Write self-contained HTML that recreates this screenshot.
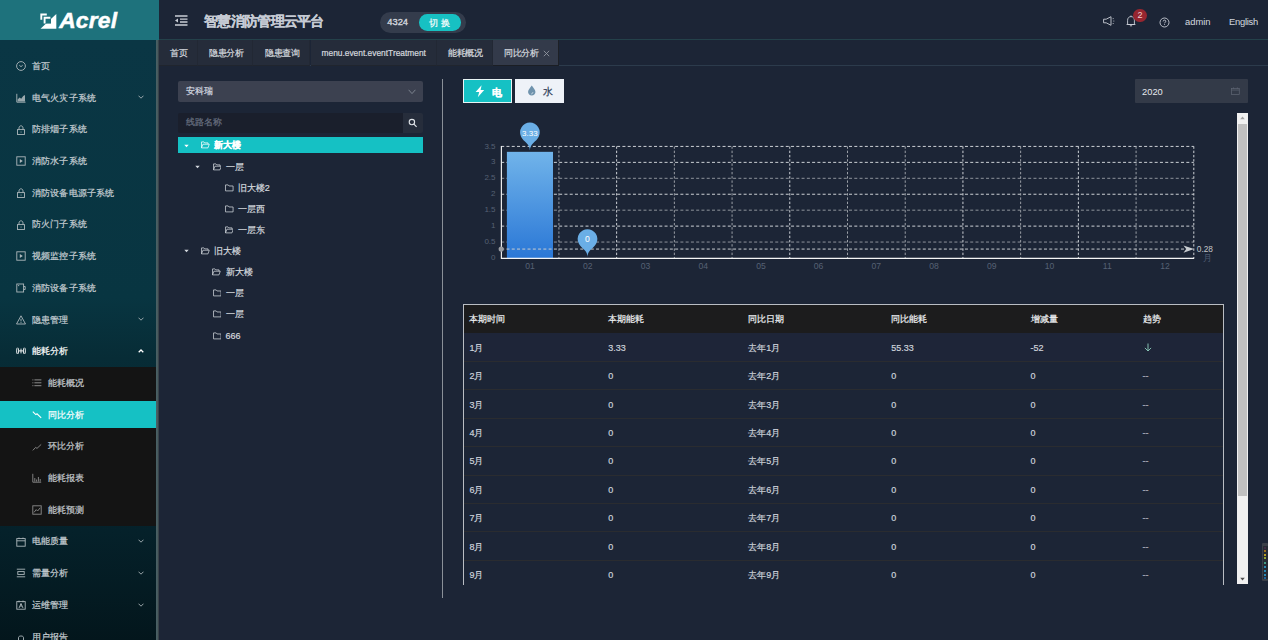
<!DOCTYPE html>
<html><head><meta charset="utf-8">
<style>
*{margin:0;padding:0;box-sizing:border-box}
html,body{width:1268px;height:640px;overflow:hidden}
body{background:#1c2536;font-family:"Liberation Sans",sans-serif;color:#c9ced6;position:relative;-webkit-text-stroke:0.2px currentColor}
.a{position:absolute}
#logo{left:0;top:0;width:158.5px;height:39.7px;background:#1e727c}
#hdr{left:158.5px;top:0;width:1109.5px;height:39.5px;background:#1c2536}
#side{left:0;top:39.7px;width:156px;height:600.3px;background:linear-gradient(#0a3644 0%,#083541 43%,#072c36 53%,#05212a 82%,#03161c 100%);overflow:hidden}
#sscroll{left:156px;top:39.7px;width:3px;height:600.3px;background:linear-gradient(90deg,#4a6266 0,#46585c 66%,#394349 66%)}
.mi{position:absolute;left:0;width:156px;height:31.7px;font-size:9.2px;color:#c9d2d6;line-height:31.7px;white-space:nowrap}
.mi .ic{position:absolute;left:16px;top:11px;width:10px;height:10px}
.mi .tx{position:absolute;left:32px;top:0.8px;letter-spacing:0.14px}
.mi .chev{position:absolute;left:137.5px;top:13px;width:6px;height:4px}
.sub .ic{left:32px}
.sub .tx{left:48px}
#submenu{left:0;top:367.15px;width:156px;height:158.5px;background:#141414}
#tabs{left:159px;top:39.2px;width:1109px;height:26.6px;background:#1c2536;border-top:1px solid #24414a;border-bottom:1px solid #2c3b4c}
.tab{position:absolute;top:0;height:25.6px;background:#252c3a;font-size:9px;letter-spacing:-0.45px;line-height:27.6px;color:#d5d9df;text-align:left;border-right:1px solid #222834;border-bottom:1px solid #20252e}
</style></head><body>

<div id="logo" class="a">
<svg class="a" style="left:40px;top:13px" width="17" height="17" viewBox="0 0 17 17">
<path d="M0.5,15.7 L16.3,15.7 L16.3,1.1 Z" fill="#fff"/>
<rect x="6" y="5.6" width="5" height="5" fill="#1e727c"/>
<path d="M1.3,6.8 V1.5 H6.8" stroke="#fff" stroke-width="1.9" fill="none"/>
<path d="M4.6,10.4 V4.8 H10.4" stroke="#fff" stroke-width="1.9" fill="none"/>
</svg>
<div class="a" style="left:59.2px;top:7.2px;font-size:22.8px;font-weight:bold;font-style:italic;color:#fff;line-height:26px;letter-spacing:0.2px;-webkit-text-stroke:0.5px #fff">Acrel</div>
</div>
<div id="hdr" class="a">
<svg class="a" style="left:16.5px;top:15px" width="13" height="11" viewBox="0 0 13 11">
<path d="M0,1 H12.5 M5,4.2 H12.5 M5,7 H12.5 M0,10 H12.5" stroke="#c9ced6" stroke-width="1.3"/>
<path d="M0,5.6 L3,3.6 V7.6 Z" fill="#c9ced6"/>
</svg>
<div class="a" style="left:45.5px;top:11px;font-size:14px;letter-spacing:-0.7px;font-weight:bold;color:#c5cad3;line-height:20px;white-space:nowrap">智慧消防管理云平台</div>
<div class="a" style="left:221.5px;top:11.8px;width:85.5px;height:21.4px;border-radius:11px;background:#343c4c">
 <div class="a" style="left:7.3px;top:-1px;font-size:9.3px;line-height:22px;color:#d3d7de;-webkit-text-stroke:0.35px #d3d7de">4324</div>
 <div class="a" style="left:38.5px;top:2.3px;width:42.5px;height:16.5px;border-radius:8.25px;background:#17c1c3;color:#fff;font-size:9.2px;line-height:18px;text-align:center;letter-spacing:3px;padding-left:3px">切换</div>
</div>
<svg class="a" style="left:944px;top:15.5px" width="12" height="10" viewBox="0 0 12 10">
<path d="M0.6,3.2 H3.2 L8,0.7 V9.3 L3.2,6.8 H0.6 Z" stroke="#c9ced6" stroke-width="0.9" fill="none" stroke-linejoin="round"/>
<path d="M10.2,2.2 v0.9 M10.8,4.6 v0.9 M10.2,7 v0.9" stroke="#c9ced6" stroke-width="0.9"/>
</svg>
<svg class="a" style="left:967.5px;top:14.5px" width="10" height="12" viewBox="0 0 10 12">
<path d="M1.6,9.5 V5.2 C1.6,3 3,1.6 5,1.6 C7,1.6 8.4,3 8.4,5.2 V9.5 Z M0.6,9.5 H9.4 M3.9,10.8 H6.1 M5,0.5 V1.6" stroke="#c9ced6" stroke-width="0.9" fill="none"/>
</svg>
<div class="a" style="left:974.8px;top:8.6px;width:13.4px;height:13.4px;border-radius:50%;background:#962630;color:#f0d0d0;font-size:9px;line-height:13.4px;text-align:center;-webkit-text-stroke:0">2</div>
<svg class="a" style="left:1000.3px;top:16.8px" width="11" height="11" viewBox="0 0 11 11">
<circle cx="5.5" cy="5.5" r="4.5" stroke="#c9ced6" stroke-width="0.9" fill="none"/>
<path d="M4.2,4.4 C4.2,3.6 4.8,3.1 5.5,3.1 C6.2,3.1 6.8,3.6 6.8,4.3 C6.8,5.1 5.6,5.3 5.6,6.3" stroke="#c9ced6" stroke-width="0.9" fill="none"/>
<circle cx="5.6" cy="7.6" r="0.5" fill="#c9ced6"/>
</svg>
<div class="a" style="left:1026.5px;top:14.6px;font-size:9.4px;line-height:14px;color:#d0d4dc;-webkit-text-stroke:0.05px #d0d4dc">admin</div>
<div class="a" style="left:1070.5px;top:14.6px;font-size:9.4px;letter-spacing:-0.25px;line-height:14px;color:#d0d4dc;-webkit-text-stroke:0.05px #d0d4dc">English</div>
</div>

<div id="side" class="a">
<div class="a" style="left:0;top:327.45px;width:156px;height:158.5px;background:#141414"></div>
<div class="mi" style="top:10.45px;color:#c5cdd2"><svg class="a" style="left:16px;top:11px" width="10" height="10" viewBox="0 0 10 10"><circle cx="5" cy="5" r="4.4" stroke="#aeb8bc" stroke-width="0.9" fill="none"/><path d="M3.3,4.2 Q5,7.2 6.7,4.2" stroke="#aeb8bc" stroke-width="0.9" fill="none"/></svg><span class="tx" style="left:32px">首页</span></div>
<div class="mi" style="top:42.15px;color:#c5cdd2"><svg class="a" style="left:16px;top:11px" width="10" height="10" viewBox="0 0 10 10"><path d="M0.8,0.8 V9.2 H9.5" stroke="#aeb8bc" stroke-width="0.9" fill="none"/><path d="M1.6,8.6 V6.4 L3.6,4.4 L5.2,5.8 L7.2,3 L9,2 V8.6 Z" fill="#9aa8ad"/></svg><span class="tx" style="left:32px">电气火灾子系统</span><svg class="a" style="left:137.5px;top:13.5px" width="6" height="4" viewBox="0 0 6 4"><path d="M0.5,0.7 L3,3.2 L5.5,0.7" stroke="#aab4b8" stroke-width="0.9" fill="none"/></svg></div>
<div class="mi" style="top:73.85px;color:#c5cdd2"><svg class="a" style="left:16px;top:11px" width="10" height="10" viewBox="0 0 10 10"><rect x="1.5" y="4.6" width="7" height="4.9" stroke="#aeb8bc" stroke-width="0.9" fill="none"/><path d="M3,4.6 V3 C3,1.7 3.9,0.8 5,0.8 C6.1,0.8 7,1.7 7,3 V4.6" stroke="#aeb8bc" stroke-width="0.9" fill="none"/><rect x="4.6" y="6.6" width="0.9" height="0.9" fill="#aeb8bc"/></svg><span class="tx" style="left:32px">防排烟子系统</span></div>
<div class="mi" style="top:105.55px;color:#c5cdd2"><svg class="a" style="left:16px;top:11px" width="10" height="10" viewBox="0 0 10 10"><rect x="0.8" y="0.8" width="8.4" height="8.4" stroke="#aeb8bc" stroke-width="0.9" fill="none"/><path d="M3.8,3 L6.8,5 L3.8,7 Z" fill="#aeb8bc"/></svg><span class="tx" style="left:32px">消防水子系统</span></div>
<div class="mi" style="top:137.25px;color:#c5cdd2"><svg class="a" style="left:16px;top:11px" width="10" height="10" viewBox="0 0 10 10"><rect x="1.5" y="4.6" width="7" height="4.9" stroke="#aeb8bc" stroke-width="0.9" fill="none"/><path d="M3,4.6 V3 C3,1.7 3.9,0.8 5,0.8 C6.1,0.8 7,1.7 7,3 V4.6" stroke="#aeb8bc" stroke-width="0.9" fill="none"/><rect x="4.6" y="6.6" width="0.9" height="0.9" fill="#aeb8bc"/></svg><span class="tx" style="left:32px">消防设备电源子系统</span></div>
<div class="mi" style="top:168.95px;color:#c5cdd2"><svg class="a" style="left:16px;top:11px" width="10" height="10" viewBox="0 0 10 10"><rect x="1.5" y="4.6" width="7" height="4.9" stroke="#aeb8bc" stroke-width="0.9" fill="none"/><path d="M3,4.6 V3 C3,1.7 3.9,0.8 5,0.8 C6.1,0.8 7,1.7 7,3 V4.6" stroke="#aeb8bc" stroke-width="0.9" fill="none"/><rect x="4.6" y="6.6" width="0.9" height="0.9" fill="#aeb8bc"/></svg><span class="tx" style="left:32px">防火门子系统</span></div>
<div class="mi" style="top:200.65px;color:#c5cdd2"><svg class="a" style="left:16px;top:11px" width="10" height="10" viewBox="0 0 10 10"><rect x="0.8" y="0.8" width="8.4" height="8.4" stroke="#aeb8bc" stroke-width="0.9" fill="none"/><path d="M3.8,3 L6.8,5 L3.8,7 Z" fill="#aeb8bc"/></svg><span class="tx" style="left:32px">视频监控子系统</span></div>
<div class="mi" style="top:232.35px;color:#c5cdd2"><svg class="a" style="left:16px;top:11px" width="10" height="10" viewBox="0 0 10 10"><rect x="0.8" y="1" width="6.8" height="8" stroke="#aeb8bc" stroke-width="0.9" fill="none"/><path d="M7.6,3.5 H9.2 V6.5 H7.6" stroke="#aeb8bc" stroke-width="0.9" fill="none"/><path d="M2,2.6 H3.2" stroke="#aeb8bc" stroke-width="0.9" fill="none"/></svg><span class="tx" style="left:32px">消防设备子系统</span></div>
<div class="mi" style="top:264.05px;color:#c5cdd2"><svg class="a" style="left:16px;top:11px" width="10" height="10" viewBox="0 0 10 10"><path d="M5,0.8 L9.5,9 H0.5 Z" stroke="#aeb8bc" stroke-width="0.9" fill="none" stroke-linejoin="round"/><path d="M5,3.8 V6.4" stroke="#aeb8bc" stroke-width="0.9" fill="none"/><circle cx="5" cy="7.6" r="0.5" fill="#aeb8bc"/></svg><span class="tx" style="left:32px">隐患管理</span><svg class="a" style="left:137.5px;top:13.5px" width="6" height="4" viewBox="0 0 6 4"><path d="M0.5,0.7 L3,3.2 L5.5,0.7" stroke="#aab4b8" stroke-width="0.9" fill="none"/></svg></div>
<div class="mi" style="top:295.75px;color:#fff"><svg class="a" style="left:16px;top:11px" width="10" height="10" viewBox="0 0 10 10"><ellipse cx="1.6" cy="4.9" rx="1" ry="3.1" stroke="#fff" stroke-width="0.9" fill="none"/><ellipse cx="8.4" cy="4.9" rx="1" ry="3.1" stroke="#fff" stroke-width="0.9" fill="none"/><path d="M2.6,4.9 H7.4 M5,2.6 V7.4" stroke="#fff" stroke-width="0.9"/></svg><span class="tx" style="left:32px">能耗分析</span><svg class="a" style="left:137.5px;top:14px" width="6" height="4" viewBox="0 0 6 4"><path d="M0.7,3.2 L3,1 L5.3,3.2" stroke="#fff" stroke-width="1.3" fill="none"/></svg></div>
<div class="mi" style="top:327.45px;color:#c3c8cc"><svg class="a" style="left:32px;top:11px" width="10" height="10" viewBox="0 0 10 10"><path d="M0.4,1.9 H1.4 M0.4,4.8 H1.4 M0.4,7.7 H1.4 M2.4,1.9 H9.4 M2.4,4.8 H9.4 M2.4,7.7 H9.4" stroke="#8c8c8c" stroke-width="1"/></svg><span class="tx" style="left:48px">能耗概况</span></div>
<div class="a" style="left:0;top:361.80px;width:156px;height:26.4px;background:#15c1c4"></div>
<div class="mi" style="top:359.15px;color:#fff"><svg class="a" style="left:32px;top:11px" width="10" height="10" viewBox="0 0 10 10"><path d="M0.8,1.6 L3.8,4.6 L5,3.8 L9.2,7.8" stroke="#fff" stroke-width="1.1" fill="none"/></svg><span class="tx" style="left:48px">同比分析</span></div>
<div class="mi" style="top:390.85px;color:#c3c8cc"><svg class="a" style="left:32px;top:11px" width="10" height="10" viewBox="0 0 10 10"><path d="M0.8,8.4 L3.6,5.4 L5,6.4 L9.2,2.4" stroke="#8c8c8c" stroke-width="0.9" fill="none"/></svg><span class="tx" style="left:48px">环比分析</span></div>
<div class="mi" style="top:422.55px;color:#c3c8cc"><svg class="a" style="left:32px;top:11px" width="10" height="10" viewBox="0 0 10 10"><path d="M0.8,0.8 V9.2 H9.2" stroke="#8c8c8c" stroke-width="0.9" fill="none"/><path d="M2.8,8.6 V5 M4.6,8.6 V6.5 M6.4,8.6 V4 M8.2,8.6 V6" stroke="#8c8c8c" stroke-width="0.9" fill="none"/></svg><span class="tx" style="left:48px">能耗报表</span></div>
<div class="mi" style="top:454.25px;color:#c3c8cc"><svg class="a" style="left:32px;top:11px" width="10" height="10" viewBox="0 0 10 10"><rect x="0.8" y="0.8" width="8.4" height="8.4" stroke="#8c8c8c" stroke-width="0.9" fill="none"/><path d="M2,7.4 L4.2,4.6 L5.6,6 L8.2,2.8" stroke="#8c8c8c" stroke-width="0.9" fill="none"/></svg><span class="tx" style="left:48px">能耗预测</span></div>
<div class="mi" style="top:485.95px;color:#c5cdd2"><svg class="a" style="left:16px;top:11px" width="10" height="10" viewBox="0 0 10 10"><rect x="0.8" y="1.6" width="8.4" height="7.6" stroke="#aeb8bc" stroke-width="0.9" fill="none"/><path d="M0.8,3.8 H9.2 M3,0.6 V2 M7,0.6 V2" stroke="#aeb8bc" stroke-width="0.9" fill="none"/></svg><span class="tx" style="left:32px">电能质量</span><svg class="a" style="left:137.5px;top:13.5px" width="6" height="4" viewBox="0 0 6 4"><path d="M0.5,0.7 L3,3.2 L5.5,0.7" stroke="#aab4b8" stroke-width="0.9" fill="none"/></svg></div>
<div class="mi" style="top:517.65px;color:#c5cdd2"><svg class="a" style="left:16px;top:11px" width="10" height="10" viewBox="0 0 10 10"><path d="M0.8,1.2 H9.2 M0.8,8.8 H9.2" stroke="#aeb8bc" stroke-width="0.9" fill="none"/><rect x="1.8" y="3.6" width="6.4" height="2.8" stroke="#aeb8bc" stroke-width="0.9" fill="none"/></svg><span class="tx" style="left:32px">需量分析</span><svg class="a" style="left:137.5px;top:13.5px" width="6" height="4" viewBox="0 0 6 4"><path d="M0.5,0.7 L3,3.2 L5.5,0.7" stroke="#aab4b8" stroke-width="0.9" fill="none"/></svg></div>
<div class="mi" style="top:549.35px;color:#c5cdd2"><svg class="a" style="left:16px;top:11px" width="10" height="10" viewBox="0 0 10 10"><rect x="0.8" y="1.6" width="8.4" height="7.6" stroke="#aeb8bc" stroke-width="0.9" fill="none"/><path d="M3,0.6 V2.4 M7,0.6 V2.4 M3,8 L5,3.6 L7,8 M5,3.6 V7" stroke="#aeb8bc" stroke-width="0.9" fill="none"/></svg><span class="tx" style="left:32px">运维管理</span><svg class="a" style="left:137.5px;top:13.5px" width="6" height="4" viewBox="0 0 6 4"><path d="M0.5,0.7 L3,3.2 L5.5,0.7" stroke="#aab4b8" stroke-width="0.9" fill="none"/></svg></div>
<div class="mi" style="top:581.05px;color:#c5cdd2"><svg class="a" style="left:16px;top:11px" width="10" height="10" viewBox="0 0 10 10"><path d="M1,9 H9 M2.5,9 V5.5 C2.5,3.5 7.5,3.5 7.5,5.5 V9" stroke="#aeb8bc" stroke-width="0.9" fill="none"/></svg><span class="tx" style="left:32px">用户报告</span></div>
</div>
<div id="sscroll" class="a"></div>
<div id="tabs" class="a">
<div class="tab" style="left:0.0px;width:38.5px;padding-left:11.0px;">首页</div>
<div class="tab" style="left:38.5px;width:55.8px;padding-left:11.5px;">隐患分析</div>
<div class="tab" style="left:94.3px;width:57.2px;padding-left:12.0px;">隐患查询</div>
<div class="tab" style="left:151.5px;width:126.0px;padding-left:11.0px;font-size:8.4px;letter-spacing:0;">menu.event.eventTreatment</div>
<div class="tab" style="left:277.5px;width:56.5px;padding-left:11.5px;">能耗概况</div>
<div class="tab" style="left:334.0px;width:65.6px;padding-left:11.4px;background:#333a4a;border-right-color:#1d2026;border-bottom-color:#1b1e24;">同比分析<svg style="position:absolute;left:49.8px;top:9.6px" width="7" height="7" viewBox="0 0 7 7"><path d="M0.8,0.8 L6.2,6.2 M6.2,0.8 L0.8,6.2" stroke="#9aa0a8" stroke-width="0.8"/></svg></div>
</div>

<!-- left panel -->
<div class="a" style="left:178.3px;top:81px;width:244.5px;height:21px;background:#3c4150;border-radius:2px">
 <div class="a" style="left:7.5px;top:0;font-size:9px;line-height:21px;color:#d6dae0">安科瑞</div>
 <svg class="a" style="left:229.5px;top:7.5px" width="8" height="6" viewBox="0 0 8 6"><path d="M0.6,0.8 L4,4.6 L7.4,0.8" stroke="#8c939e" stroke-width="0.8" fill="none"/></svg>
</div>
<div class="a" style="left:178.3px;top:113.2px;width:225px;height:19.8px;background:#1a1f2c;border-radius:2px 0 0 2px">
 <div class="a" style="left:7.3px;top:0;font-size:9px;line-height:19.8px;color:#687080">线路名称</div>
</div>
<div class="a" style="left:403.2px;top:113.2px;width:19.6px;height:19.8px;background:#262d3b;border-radius:0 2px 2px 0">
 <svg class="a" style="left:4.8px;top:5px" width="10" height="10" viewBox="0 0 10 10"><circle cx="3.9" cy="4.1" r="2.7" stroke="#e0e4e8" stroke-width="1.1" fill="none"/><path d="M5.9,6.1 L8.6,8.8" stroke="#e0e4e8" stroke-width="1.2"/></svg>
</div>
<div class="a" style="left:178.3px;top:137.2px;width:244.5px;height:15.8px;background:#15c1c4"></div>
<svg class="a" style="left:184.3px;top:143.5px" width="5" height="4" viewBox="0 0 5 4"><path d="M0.3,0.8 H4.7 L2.5,3.3 Z" fill="#ffffff"/></svg>
<svg class="a" style="left:200.8px;top:141.30px" width="8.8" height="8" viewBox="0 0 10 9"><path d="M0.6,7.8 V1 H3.4 L4.4,2.1 H8 V3.6 M0.6,7.8 L2.2,3.6 H9.4 L7.9,7.8 Z" stroke="#ffffff" stroke-width="0.85" fill="none" stroke-linejoin="round"/></svg>
<div class="a" style="left:213.7px;top:138.30px;font-size:9px;line-height:14px;color:#ffffff;font-weight:bold;white-space:nowrap">新大楼</div>
<svg class="a" style="left:195.3px;top:164.7px" width="5" height="4" viewBox="0 0 5 4"><path d="M0.3,0.8 H4.7 L2.5,3.3 Z" fill="#d3d8de"/></svg>
<svg class="a" style="left:212.5px;top:162.50px" width="8.8" height="8" viewBox="0 0 10 9"><path d="M0.6,7.8 V1 H3.4 L4.4,2.1 H8 V3.6 M0.6,7.8 L2.2,3.6 H9.4 L7.9,7.8 Z" stroke="#d3d8de" stroke-width="0.85" fill="none" stroke-linejoin="round"/></svg>
<div class="a" style="left:226px;top:159.50px;font-size:9px;line-height:14px;color:#d3d8de;white-space:nowrap">一层</div>
<svg class="a" style="left:224.9px;top:183.60px" width="8.8" height="8" viewBox="0 0 10 9"><path d="M0.6,7.8 V1 H3.6 L4.6,2.2 H9.2 V7.8 Z" stroke="#d3d8de" stroke-width="0.85" fill="none" stroke-linejoin="round"/></svg>
<div class="a" style="left:237.8px;top:180.60px;font-size:9px;line-height:14px;color:#d3d8de;white-space:nowrap">旧大楼2</div>
<svg class="a" style="left:224.9px;top:204.80px" width="8.8" height="8" viewBox="0 0 10 9"><path d="M0.6,7.8 V1 H3.6 L4.6,2.2 H9.2 V7.8 Z" stroke="#d3d8de" stroke-width="0.85" fill="none" stroke-linejoin="round"/></svg>
<div class="a" style="left:237.8px;top:201.80px;font-size:9px;line-height:14px;color:#d3d8de;white-space:nowrap">一层西</div>
<svg class="a" style="left:224.5px;top:225.90px" width="8.8" height="8" viewBox="0 0 10 9"><path d="M0.6,7.8 V1 H3.4 L4.4,2.1 H8 V3.6 M0.6,7.8 L2.2,3.6 H9.4 L7.9,7.8 Z" stroke="#d3d8de" stroke-width="0.85" fill="none" stroke-linejoin="round"/></svg>
<div class="a" style="left:237.8px;top:222.90px;font-size:9px;line-height:14px;color:#d3d8de;white-space:nowrap">一层东</div>
<svg class="a" style="left:184.3px;top:249.2px" width="5" height="4" viewBox="0 0 5 4"><path d="M0.3,0.8 H4.7 L2.5,3.3 Z" fill="#d3d8de"/></svg>
<svg class="a" style="left:200.8px;top:247.00px" width="8.8" height="8" viewBox="0 0 10 9"><path d="M0.6,7.8 V1 H3.4 L4.4,2.1 H8 V3.6 M0.6,7.8 L2.2,3.6 H9.4 L7.9,7.8 Z" stroke="#d3d8de" stroke-width="0.85" fill="none" stroke-linejoin="round"/></svg>
<div class="a" style="left:214px;top:244.00px;font-size:9px;line-height:14px;color:#d3d8de;white-space:nowrap">旧大楼</div>
<svg class="a" style="left:212.3px;top:268.20px" width="8.8" height="8" viewBox="0 0 10 9"><path d="M0.6,7.8 V1 H3.4 L4.4,2.1 H8 V3.6 M0.6,7.8 L2.2,3.6 H9.4 L7.9,7.8 Z" stroke="#d3d8de" stroke-width="0.85" fill="none" stroke-linejoin="round"/></svg>
<div class="a" style="left:225.6px;top:265.20px;font-size:9px;line-height:14px;color:#d3d8de;white-space:nowrap">新大楼</div>
<svg class="a" style="left:212.5px;top:289.30px" width="8.8" height="8" viewBox="0 0 10 9"><path d="M0.6,7.8 V1 H3.6 L4.6,2.2 H9.2 V7.8 Z" stroke="#d3d8de" stroke-width="0.85" fill="none" stroke-linejoin="round"/></svg>
<div class="a" style="left:225.6px;top:286.30px;font-size:9px;line-height:14px;color:#d3d8de;white-space:nowrap">一层</div>
<svg class="a" style="left:212.5px;top:310.40px" width="8.8" height="8" viewBox="0 0 10 9"><path d="M0.6,7.8 V1 H3.6 L4.6,2.2 H9.2 V7.8 Z" stroke="#d3d8de" stroke-width="0.85" fill="none" stroke-linejoin="round"/></svg>
<div class="a" style="left:225.6px;top:307.40px;font-size:9px;line-height:14px;color:#d3d8de;white-space:nowrap">一层</div>
<svg class="a" style="left:212.5px;top:331.60px" width="8.8" height="8" viewBox="0 0 10 9"><path d="M0.6,7.8 V1 H3.6 L4.6,2.2 H9.2 V7.8 Z" stroke="#d3d8de" stroke-width="0.85" fill="none" stroke-linejoin="round"/></svg>
<div class="a" style="left:225.6px;top:328.60px;font-size:9px;line-height:14px;color:#d3d8de;white-space:nowrap">666</div>
<div class="a" style="left:442px;top:79.3px;width:1px;height:518.5px;background:#8a9098"></div>

<!-- right panel -->
<div class="a" style="left:462.9px;top:79.3px;width:49px;height:23.5px;background:#15c1c4;border:1px solid #e8f4f4">
 <svg class="a" style="left:11px;top:4.8px" width="10" height="13" viewBox="0 0 10 13"><path d="M6.6,0.3 L0.6,7.0 H4.2 L2.8,12.2 L9.2,5.0 H5.6 Z" fill="#fff"/></svg>
 <div class="a" style="left:28.2px;top:1.4px;font-size:10px;line-height:21.5px;color:#fff;font-weight:bold">电</div>
</div>
<div class="a" style="left:515px;top:79.3px;width:49px;height:23.5px;background:#eef2f8">
 <svg class="a" style="left:12.2px;top:6.2px" width="9.5" height="11" viewBox="0 0 9 11"><path d="M4.5,0.5 C3.2,2.6 0.8,4.8 0.8,7 C0.8,9 2.5,10.4 4.5,10.4 C6.5,10.4 8.2,9 8.2,7 C8.2,4.8 5.8,2.6 4.5,0.5 Z" fill="#6f93ad"/><path d="M5.6,7.2 C5.6,8.2 5,8.8 4,8.9" stroke="#eef2f8" stroke-width="0.7" fill="none"/></svg>
 <div class="a" style="left:28.3px;top:1.2px;font-size:10px;line-height:23px;color:#2b3a55">水</div>
</div>
<div class="a" style="left:1134.8px;top:79.3px;width:113.2px;height:23.5px;background:#333a48;border-radius:1px">
 <div class="a" style="left:7.3px;top:1.4px;font-size:9.3px;line-height:23.5px;color:#e6e8ec;-webkit-text-stroke:0">2020</div>
 <svg class="a" style="left:96.0px;top:8.00px" width="8.8" height="8" viewBox="0 0 10 9"><rect x="0.6" y="1.6" width="8.8" height="6.8" stroke="#5f6674" stroke-width="0.8" fill="none"/><path d="M0.6,3.4 H9.4 M2.8,0.4 V2 M7.2,0.4 V2" stroke="#5f6674" stroke-width="0.8"/></svg>
</div>
<svg class="a" style="left:460px;top:110px;-webkit-text-stroke:0" width="780" height="175" viewBox="460 110 780 175">
<defs><linearGradient id="bg" x1="0" y1="0" x2="0" y2="1"><stop offset="0" stop-color="#71b4ea"/><stop offset="1" stop-color="#2a77d6"/></linearGradient></defs>
<line x1="501.2" y1="242.06" x2="1193.8" y2="242.06" stroke="#8e939b" stroke-width="1" stroke-dasharray="3 2.27"/>
<line x1="501.2" y1="226.12" x2="1193.8" y2="226.12" stroke="#cdd1d6" stroke-width="1" stroke-dasharray="3 2.27"/>
<line x1="501.2" y1="210.18" x2="1193.8" y2="210.18" stroke="#8e939b" stroke-width="1" stroke-dasharray="3 2.27"/>
<line x1="501.2" y1="194.24" x2="1193.8" y2="194.24" stroke="#cdd1d6" stroke-width="1" stroke-dasharray="3 2.27"/>
<line x1="501.2" y1="178.30" x2="1193.8" y2="178.30" stroke="#8e939b" stroke-width="1" stroke-dasharray="3 2.27"/>
<line x1="501.2" y1="162.36" x2="1193.8" y2="162.36" stroke="#cdd1d6" stroke-width="1" stroke-dasharray="3 2.27"/>
<line x1="501.2" y1="146.42" x2="1193.8" y2="146.42" stroke="#cdd1d6" stroke-width="1" stroke-dasharray="3 2.27"/>
<line x1="558.92" y1="146.42" x2="558.92" y2="258.0" stroke="#9a9fa6" stroke-width="1" stroke-dasharray="2.4 1.85"/>
<line x1="616.63" y1="146.42" x2="616.63" y2="258.0" stroke="#cdd1d6" stroke-width="1" stroke-dasharray="2.4 1.85"/>
<line x1="674.35" y1="146.42" x2="674.35" y2="258.0" stroke="#9a9fa6" stroke-width="1" stroke-dasharray="2.4 1.85"/>
<line x1="732.07" y1="146.42" x2="732.07" y2="258.0" stroke="#9a9fa6" stroke-width="1" stroke-dasharray="2.4 1.85"/>
<line x1="789.78" y1="146.42" x2="789.78" y2="258.0" stroke="#cdd1d6" stroke-width="1" stroke-dasharray="2.4 1.85"/>
<line x1="847.50" y1="146.42" x2="847.50" y2="258.0" stroke="#9a9fa6" stroke-width="1" stroke-dasharray="2.4 1.85"/>
<line x1="905.22" y1="146.42" x2="905.22" y2="258.0" stroke="#9a9fa6" stroke-width="1" stroke-dasharray="2.4 1.85"/>
<line x1="962.93" y1="146.42" x2="962.93" y2="258.0" stroke="#cdd1d6" stroke-width="1" stroke-dasharray="2.4 1.85"/>
<line x1="1020.65" y1="146.42" x2="1020.65" y2="258.0" stroke="#9a9fa6" stroke-width="1" stroke-dasharray="2.4 1.85"/>
<line x1="1078.37" y1="146.42" x2="1078.37" y2="258.0" stroke="#cdd1d6" stroke-width="1" stroke-dasharray="2.4 1.85"/>
<line x1="1136.08" y1="146.42" x2="1136.08" y2="258.0" stroke="#9a9fa6" stroke-width="1" stroke-dasharray="2.4 1.85"/>
<line x1="1193.80" y1="146.42" x2="1193.80" y2="258.0" stroke="#cdd1d6" stroke-width="1" stroke-dasharray="2.4 1.85"/>
<rect x="506.9" y="151.84" width="46.1" height="106.16" fill="url(#bg)"/>
<line x1="501.4" y1="145.92" x2="501.4" y2="258.6" stroke="#e8eaec" stroke-width="1.2"/>
<line x1="500.9" y1="258.4" x2="1194.2" y2="258.4" stroke="#f4f5f6" stroke-width="1.2"/>
<line x1="501.2" y1="249.07" x2="1186" y2="249.07" stroke="#c8ccd0" stroke-width="1" stroke-dasharray="3 2.27"/>
<path d="M1183.5,245.47 L1194,249.07 L1183.5,252.67 L1186.2,249.07 Z" fill="#c8ccd0"/>
<circle cx="501.2" cy="249.07" r="2.6" fill="#9a9da2"/>
<text x="1196.8" y="252" font-size="8.3" fill="#c4c6c8" font-family="Liberation Sans">0.28</text>
<text x="1203" y="260.5" font-size="9" fill="#4d5a70" font-family="Liberation Sans">月</text>
<text x="495.5" y="260.10" font-size="8" fill="#566174" text-anchor="end" font-family="Liberation Sans">0</text>
<text x="495.5" y="244.16" font-size="8" fill="#566174" text-anchor="end" font-family="Liberation Sans">0.5</text>
<text x="495.5" y="228.22" font-size="8" fill="#566174" text-anchor="end" font-family="Liberation Sans">1</text>
<text x="495.5" y="212.28" font-size="8" fill="#566174" text-anchor="end" font-family="Liberation Sans">1.5</text>
<text x="495.5" y="196.34" font-size="8" fill="#566174" text-anchor="end" font-family="Liberation Sans">2</text>
<text x="495.5" y="180.40" font-size="8" fill="#566174" text-anchor="end" font-family="Liberation Sans">2.5</text>
<text x="495.5" y="164.46" font-size="8" fill="#566174" text-anchor="end" font-family="Liberation Sans">3</text>
<text x="495.5" y="148.52" font-size="8" fill="#566174" text-anchor="end" font-family="Liberation Sans">3.5</text>
<text x="530.06" y="269.2" font-size="8.6" fill="#566174" text-anchor="middle" font-family="Liberation Sans">01</text>
<text x="587.77" y="269.2" font-size="8.6" fill="#566174" text-anchor="middle" font-family="Liberation Sans">02</text>
<text x="645.49" y="269.2" font-size="8.6" fill="#566174" text-anchor="middle" font-family="Liberation Sans">03</text>
<text x="703.21" y="269.2" font-size="8.6" fill="#566174" text-anchor="middle" font-family="Liberation Sans">04</text>
<text x="760.92" y="269.2" font-size="8.6" fill="#566174" text-anchor="middle" font-family="Liberation Sans">05</text>
<text x="818.64" y="269.2" font-size="8.6" fill="#566174" text-anchor="middle" font-family="Liberation Sans">06</text>
<text x="876.36" y="269.2" font-size="8.6" fill="#566174" text-anchor="middle" font-family="Liberation Sans">07</text>
<text x="934.07" y="269.2" font-size="8.6" fill="#566174" text-anchor="middle" font-family="Liberation Sans">08</text>
<text x="991.79" y="269.2" font-size="8.6" fill="#566174" text-anchor="middle" font-family="Liberation Sans">09</text>
<text x="1049.51" y="269.2" font-size="8.6" fill="#566174" text-anchor="middle" font-family="Liberation Sans">10</text>
<text x="1107.22" y="269.2" font-size="8.6" fill="#566174" text-anchor="middle" font-family="Liberation Sans">11</text>
<text x="1164.94" y="269.2" font-size="8.6" fill="#566174" text-anchor="middle" font-family="Liberation Sans">12</text>
<path transform="translate(529.9,132.4)" d="M-8.85,4.33 A9.85,9.85 0 1 1 8.85,4.33 C6.25,9.64 0,11.2 0,18.1 C0,11.2 -6.25,9.64 -8.85,4.33 Z" fill="#6aaee6"/>
<text x="529.9" y="135.6" font-size="8" fill="#fff" text-anchor="middle" font-family="Liberation Sans">3.33</text>
<path transform="translate(587.5,239.0)" d="M-8.85,4.33 A9.85,9.85 0 1 1 8.85,4.33 C6.25,9.64 0,11.2 0,18.1 C0,11.2 -6.25,9.64 -8.85,4.33 Z" fill="#6aaee6"/>
<text x="587.5" y="242.2" font-size="8.6" fill="#fff" text-anchor="middle" font-family="Liberation Sans">0</text>
</svg>
<div class="a" style="left:443px;top:113px;width:794px;height:471.5px;overflow:hidden">
<div class="a" style="left:20.1px;top:191.3px;width:760.6px;height:400px;border:1px solid #b9bdc3;border-bottom:none"></div>
<div class="a" style="left:21.1px;top:192.3px;width:758.6px;height:27.5px;background:#1c1c1d"></div>
<div class="a" style="left:26.4px;top:193.0px;font-size:9px;line-height:27.5px;color:#f0f2f5;white-space:nowrap">本期时间</div>
<div class="a" style="left:165.2px;top:193.0px;font-size:9px;line-height:27.5px;color:#f0f2f5;white-space:nowrap">本期能耗</div>
<div class="a" style="left:305.2px;top:193.0px;font-size:9px;line-height:27.5px;color:#f0f2f5;white-space:nowrap">同比日期</div>
<div class="a" style="left:448.2px;top:193.0px;font-size:9px;line-height:27.5px;color:#f0f2f5;white-space:nowrap">同比能耗</div>
<div class="a" style="left:587.5px;top:193.0px;font-size:9px;line-height:27.5px;color:#f0f2f5;white-space:nowrap">增减量</div>
<div class="a" style="left:699.6px;top:193.0px;font-size:9px;line-height:27.5px;color:#f0f2f5;white-space:nowrap">趋势</div>
<div class="a" style="left:21.1px;top:219.8px;width:758.6px;height:28.4px;background:#1e2538"></div>
<div class="a" style="left:21.1px;top:248.00px;width:758.6px;height:1px;background:#2a2c30"></div>
<div class="a" style="left:26.4px;top:220.80px;font-size:9px;line-height:28.4px;color:#cdd2da;white-space:nowrap">1月</div>
<div class="a" style="left:165.2px;top:220.80px;font-size:9px;line-height:28.4px;color:#cdd2da;white-space:nowrap">3.33</div>
<div class="a" style="left:305.2px;top:220.80px;font-size:9px;line-height:28.4px;color:#cdd2da;white-space:nowrap">去年1月</div>
<div class="a" style="left:448.2px;top:220.80px;font-size:9px;line-height:28.4px;color:#cdd2da;white-space:nowrap">55.33</div>
<div class="a" style="left:587.5px;top:220.80px;font-size:9px;line-height:28.4px;color:#cdd2da;white-space:nowrap">-52</div>
<svg class="a" style="left:700.8px;top:229.80px" width="8" height="9" viewBox="0 0 8 9"><path d="M4,0.5 V8 M0.9,4.9 L4,8 L7.1,4.9" stroke="#8fd0bd" stroke-width="0.9" fill="none"/></svg>
<div class="a" style="left:21.1px;top:276.40px;width:758.6px;height:1px;background:#2a2c30"></div>
<div class="a" style="left:26.4px;top:249.20px;font-size:9px;line-height:28.4px;color:#cdd2da;white-space:nowrap">2月</div>
<div class="a" style="left:165.2px;top:249.20px;font-size:9px;line-height:28.4px;color:#cdd2da;white-space:nowrap">0</div>
<div class="a" style="left:305.2px;top:249.20px;font-size:9px;line-height:28.4px;color:#cdd2da;white-space:nowrap">去年2月</div>
<div class="a" style="left:448.2px;top:249.20px;font-size:9px;line-height:28.4px;color:#cdd2da;white-space:nowrap">0</div>
<div class="a" style="left:587.5px;top:249.20px;font-size:9px;line-height:28.4px;color:#cdd2da;white-space:nowrap">0</div>
<div class="a" style="left:699.6px;top:249.20px;font-size:9px;line-height:28.4px;color:#a9b0b8;white-space:nowrap">--</div>
<div class="a" style="left:21.1px;top:304.80px;width:758.6px;height:1px;background:#2a2c30"></div>
<div class="a" style="left:26.4px;top:277.60px;font-size:9px;line-height:28.4px;color:#cdd2da;white-space:nowrap">3月</div>
<div class="a" style="left:165.2px;top:277.60px;font-size:9px;line-height:28.4px;color:#cdd2da;white-space:nowrap">0</div>
<div class="a" style="left:305.2px;top:277.60px;font-size:9px;line-height:28.4px;color:#cdd2da;white-space:nowrap">去年3月</div>
<div class="a" style="left:448.2px;top:277.60px;font-size:9px;line-height:28.4px;color:#cdd2da;white-space:nowrap">0</div>
<div class="a" style="left:587.5px;top:277.60px;font-size:9px;line-height:28.4px;color:#cdd2da;white-space:nowrap">0</div>
<div class="a" style="left:699.6px;top:277.60px;font-size:9px;line-height:28.4px;color:#a9b0b8;white-space:nowrap">--</div>
<div class="a" style="left:21.1px;top:333.20px;width:758.6px;height:1px;background:#2a2c30"></div>
<div class="a" style="left:26.4px;top:306.00px;font-size:9px;line-height:28.4px;color:#cdd2da;white-space:nowrap">4月</div>
<div class="a" style="left:165.2px;top:306.00px;font-size:9px;line-height:28.4px;color:#cdd2da;white-space:nowrap">0</div>
<div class="a" style="left:305.2px;top:306.00px;font-size:9px;line-height:28.4px;color:#cdd2da;white-space:nowrap">去年4月</div>
<div class="a" style="left:448.2px;top:306.00px;font-size:9px;line-height:28.4px;color:#cdd2da;white-space:nowrap">0</div>
<div class="a" style="left:587.5px;top:306.00px;font-size:9px;line-height:28.4px;color:#cdd2da;white-space:nowrap">0</div>
<div class="a" style="left:699.6px;top:306.00px;font-size:9px;line-height:28.4px;color:#a9b0b8;white-space:nowrap">--</div>
<div class="a" style="left:21.1px;top:361.60px;width:758.6px;height:1px;background:#2a2c30"></div>
<div class="a" style="left:26.4px;top:334.40px;font-size:9px;line-height:28.4px;color:#cdd2da;white-space:nowrap">5月</div>
<div class="a" style="left:165.2px;top:334.40px;font-size:9px;line-height:28.4px;color:#cdd2da;white-space:nowrap">0</div>
<div class="a" style="left:305.2px;top:334.40px;font-size:9px;line-height:28.4px;color:#cdd2da;white-space:nowrap">去年5月</div>
<div class="a" style="left:448.2px;top:334.40px;font-size:9px;line-height:28.4px;color:#cdd2da;white-space:nowrap">0</div>
<div class="a" style="left:587.5px;top:334.40px;font-size:9px;line-height:28.4px;color:#cdd2da;white-space:nowrap">0</div>
<div class="a" style="left:699.6px;top:334.40px;font-size:9px;line-height:28.4px;color:#a9b0b8;white-space:nowrap">--</div>
<div class="a" style="left:21.1px;top:390.00px;width:758.6px;height:1px;background:#2a2c30"></div>
<div class="a" style="left:26.4px;top:362.80px;font-size:9px;line-height:28.4px;color:#cdd2da;white-space:nowrap">6月</div>
<div class="a" style="left:165.2px;top:362.80px;font-size:9px;line-height:28.4px;color:#cdd2da;white-space:nowrap">0</div>
<div class="a" style="left:305.2px;top:362.80px;font-size:9px;line-height:28.4px;color:#cdd2da;white-space:nowrap">去年6月</div>
<div class="a" style="left:448.2px;top:362.80px;font-size:9px;line-height:28.4px;color:#cdd2da;white-space:nowrap">0</div>
<div class="a" style="left:587.5px;top:362.80px;font-size:9px;line-height:28.4px;color:#cdd2da;white-space:nowrap">0</div>
<div class="a" style="left:699.6px;top:362.80px;font-size:9px;line-height:28.4px;color:#a9b0b8;white-space:nowrap">--</div>
<div class="a" style="left:21.1px;top:418.40px;width:758.6px;height:1px;background:#2a2c30"></div>
<div class="a" style="left:26.4px;top:391.20px;font-size:9px;line-height:28.4px;color:#cdd2da;white-space:nowrap">7月</div>
<div class="a" style="left:165.2px;top:391.20px;font-size:9px;line-height:28.4px;color:#cdd2da;white-space:nowrap">0</div>
<div class="a" style="left:305.2px;top:391.20px;font-size:9px;line-height:28.4px;color:#cdd2da;white-space:nowrap">去年7月</div>
<div class="a" style="left:448.2px;top:391.20px;font-size:9px;line-height:28.4px;color:#cdd2da;white-space:nowrap">0</div>
<div class="a" style="left:587.5px;top:391.20px;font-size:9px;line-height:28.4px;color:#cdd2da;white-space:nowrap">0</div>
<div class="a" style="left:699.6px;top:391.20px;font-size:9px;line-height:28.4px;color:#a9b0b8;white-space:nowrap">--</div>
<div class="a" style="left:21.1px;top:446.80px;width:758.6px;height:1px;background:#2a2c30"></div>
<div class="a" style="left:26.4px;top:419.60px;font-size:9px;line-height:28.4px;color:#cdd2da;white-space:nowrap">8月</div>
<div class="a" style="left:165.2px;top:419.60px;font-size:9px;line-height:28.4px;color:#cdd2da;white-space:nowrap">0</div>
<div class="a" style="left:305.2px;top:419.60px;font-size:9px;line-height:28.4px;color:#cdd2da;white-space:nowrap">去年8月</div>
<div class="a" style="left:448.2px;top:419.60px;font-size:9px;line-height:28.4px;color:#cdd2da;white-space:nowrap">0</div>
<div class="a" style="left:587.5px;top:419.60px;font-size:9px;line-height:28.4px;color:#cdd2da;white-space:nowrap">0</div>
<div class="a" style="left:699.6px;top:419.60px;font-size:9px;line-height:28.4px;color:#a9b0b8;white-space:nowrap">--</div>
<div class="a" style="left:21.1px;top:475.20px;width:758.6px;height:1px;background:#2a2c30"></div>
<div class="a" style="left:26.4px;top:448.00px;font-size:9px;line-height:28.4px;color:#cdd2da;white-space:nowrap">9月</div>
<div class="a" style="left:165.2px;top:448.00px;font-size:9px;line-height:28.4px;color:#cdd2da;white-space:nowrap">0</div>
<div class="a" style="left:305.2px;top:448.00px;font-size:9px;line-height:28.4px;color:#cdd2da;white-space:nowrap">去年9月</div>
<div class="a" style="left:448.2px;top:448.00px;font-size:9px;line-height:28.4px;color:#cdd2da;white-space:nowrap">0</div>
<div class="a" style="left:587.5px;top:448.00px;font-size:9px;line-height:28.4px;color:#cdd2da;white-space:nowrap">0</div>
<div class="a" style="left:699.6px;top:448.00px;font-size:9px;line-height:28.4px;color:#a9b0b8;white-space:nowrap">--</div>
</div>
<!--SB-->
<div class="a" style="left:1236.9px;top:112.9px;width:11.1px;height:471.6px;background:#f1f1f1">
 <div class="a" style="left:1.2px;top:11px;width:8.8px;height:372.5px;background:#c1c1c1"></div>
 <svg class="a" style="left:3px;top:3.5px" width="5" height="4" viewBox="0 0 5 4"><path d="M0.2,3.2 H4.8 L2.5,0.6 Z" fill="#a3a3a3"/></svg>
 <svg class="a" style="left:3px;top:464px" width="5" height="4" viewBox="0 0 5 4"><path d="M0.2,0.8 H4.8 L2.5,3.4 Z" fill="#505050"/></svg>
</div>
<div class="a" style="left:1262px;top:543.2px;width:6px;height:37.8px;background:#3a3f48;border-radius:1px">
 <div class="a" style="left:1px;top:2.5px;width:4.5px;height:33px;background:#262b34"></div>
 <div class="a" style="left:2.1px;top:3.8px;width:1.8px;height:2px;border-radius:1px;background:#4b2d4b"></div>
 <div class="a" style="left:2.1px;top:7.3px;width:1.8px;height:2px;border-radius:1px;background:#c98a1a"></div>
 <div class="a" style="left:2.1px;top:10.6px;width:1.8px;height:2px;border-radius:1px;background:#e8c21c"></div>
 <div class="a" style="left:2.1px;top:14.1px;width:1.8px;height:2px;border-radius:1px;background:#b8d030"></div>
 <div class="a" style="left:2.1px;top:18.4px;width:1.8px;height:2px;border-radius:1px;background:#4fc0a0"></div>
 <div class="a" style="left:2.1px;top:22.6px;width:1.8px;height:2px;border-radius:1px;background:#2aa8e0"></div>
 <div class="a" style="left:2.1px;top:26.6px;width:1.8px;height:2px;border-radius:1px;background:#2aa8e0"></div>
 <div class="a" style="left:2.1px;top:30.6px;width:1.8px;height:2px;border-radius:1px;background:#2aa8e0"></div>
 <div class="a" style="left:2.1px;top:34.3px;width:1.8px;height:2px;border-radius:1px;background:#1a78c0"></div>
</div>
</body></html>
